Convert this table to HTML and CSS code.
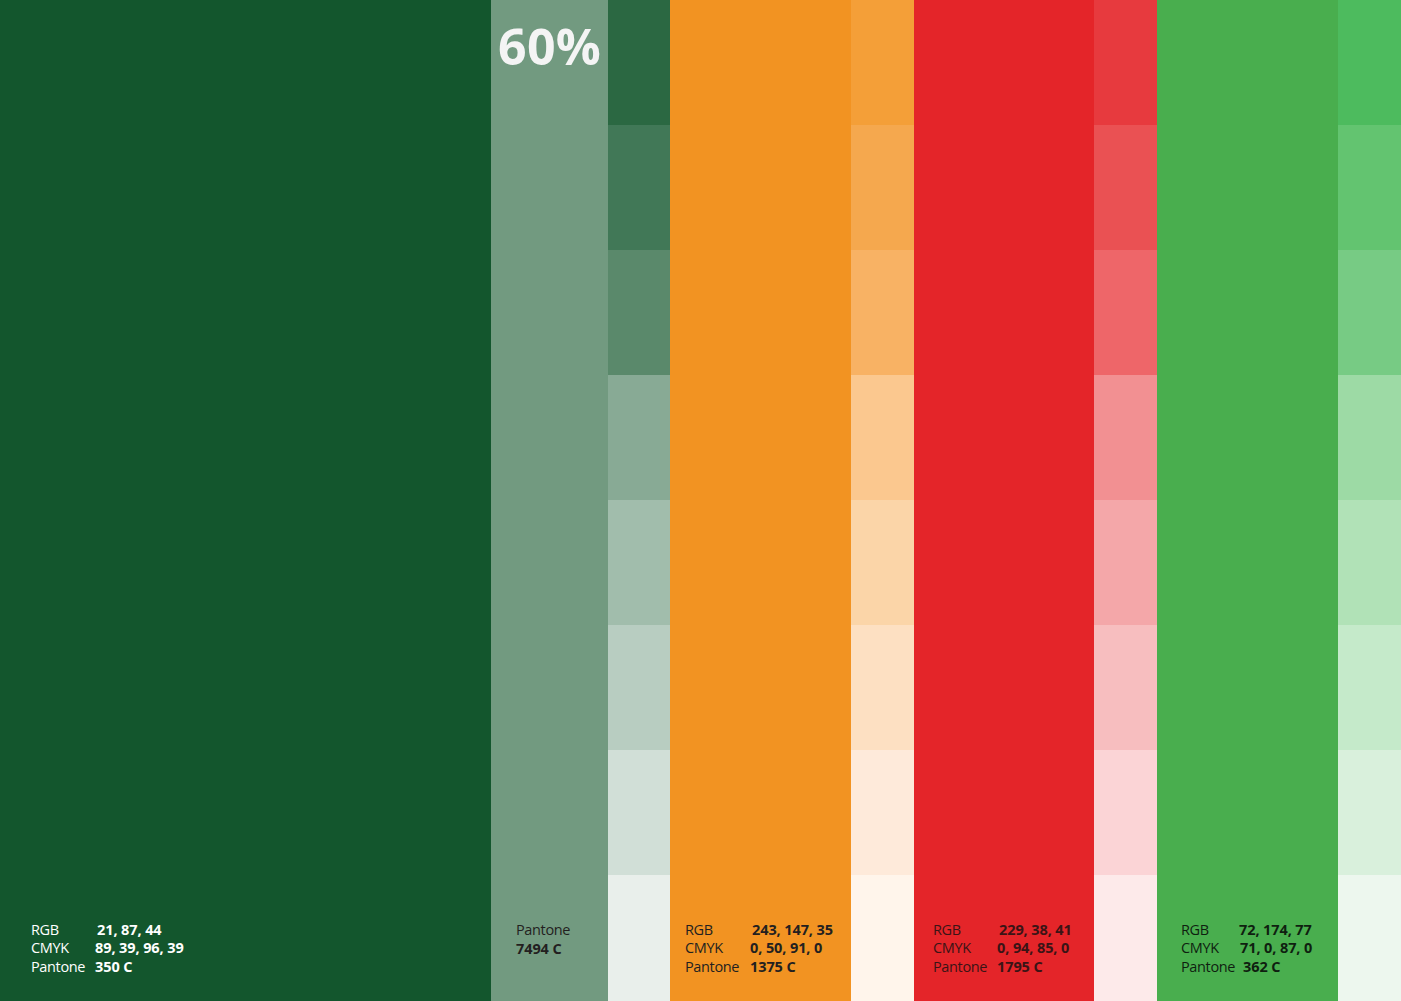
FILE: index.html
```html
<!DOCTYPE html>
<html>
<head>
<meta charset="utf-8">
<link rel="stylesheet" href="styles.css">
</head>
<body>
<div class="palette">
  <div class="col main dark">
    <div class="spec light-text">
      <span class="lbl">RGB</span><span class="val v-rgb">21, 87, 44</span>
      <span class="lbl">CMYK</span><span class="val">89, 39, 96, 39</span>
      <span class="lbl">Pantone</span><span class="val">350 C</span>
    </div>
  </div>
  <div class="col pale">
    <div class="pct">60%</div>
    <div class="spec-simple">
      <span class="lbl">Pantone</span>
      <span class="val">7494 C</span>
    </div>
  </div>
  <div class="col tints">
    <div style="background:#2b6842"></div>
    <div style="background:#417857"></div>
    <div style="background:#5a896b"></div>
    <div style="background:#88aa95"></div>
    <div style="background:#a1bdac"></div>
    <div style="background:#b8cdc1"></div>
    <div style="background:#d1dfd7"></div>
    <div style="background:#e9efeb"></div>
  </div>
  <div class="col main orange">
    <div class="spec o">
      <span class="lbl">RGB</span><span class="val v-rgb">243, 147, 35</span>
      <span class="lbl">CMYK</span><span class="val">0, 50, 91, 0</span>
      <span class="lbl">Pantone</span><span class="val">1375 C</span>
    </div>
  </div>
  <div class="col tints">
    <div style="background:#f49f38"></div>
    <div style="background:#f5a84e"></div>
    <div style="background:#f8b264"></div>
    <div style="background:#fbc88f"></div>
    <div style="background:#fbd5a8"></div>
    <div style="background:#fde0c2"></div>
    <div style="background:#feeada"></div>
    <div style="background:#fff5eb"></div>
  </div>
  <div class="col main red">
    <div class="spec r">
      <span class="lbl">RGB</span><span class="val v-rgb">229, 38, 41</span>
      <span class="lbl">CMYK</span><span class="val">0, 94, 85, 0</span>
      <span class="lbl">Pantone</span><span class="val">1795 C</span>
    </div>
  </div>
  <div class="col tints">
    <div style="background:#e73a3e"></div>
    <div style="background:#ea5153"></div>
    <div style="background:#ee6669"></div>
    <div style="background:#f29092"></div>
    <div style="background:#f4a7a9"></div>
    <div style="background:#f7bebf"></div>
    <div style="background:#fbd4d6"></div>
    <div style="background:#fdeaea"></div>
  </div>
  <div class="col main green">
    <div class="spec g">
      <span class="lbl">RGB</span><span class="val v-rgb">72, 174, 77</span>
      <span class="lbl">CMYK</span><span class="val">71, 0, 87, 0</span>
      <span class="lbl">Pantone</span><span class="val v-pan">362 C</span>
    </div>
  </div>
  <div class="col tints">
    <div style="background:#4dbb5e"></div>
    <div style="background:#63c470"></div>
    <div style="background:#77cb84"></div>
    <div style="background:#9ddaa5"></div>
    <div style="background:#b1e2b7"></div>
    <div style="background:#c5eaca"></div>
    <div style="background:#d9f0dc"></div>
    <div style="background:#edf7ee"></div>
  </div>
</div>
</body>
</html>
```
FILE: styles.css
```css
html, body {
  margin: 0;
  padding: 0;
}
body {
  font-family: "Open Sans", "Liberation Sans", sans-serif;
  width: 1401px;
  height: 1001px;
  overflow: hidden;
}
.palette {
  display: flex;
  height: 1001px;
  width: 1401px;
}
.col {
  flex: none;
  height: 100%;
  box-sizing: border-box;
}
.main {
  display: flex;
  flex-direction: column;
  justify-content: flex-end;
  padding-bottom: 24px;
}
.dark { width: 491px; background: #13562d; padding-left: 31px; }
.pale {
  width: 117px;
  background: #729a80;
  display: flex;
  flex-direction: column;
  justify-content: space-between;
  padding: 21px 0 42px 25px;
}
.orange { width: 181px; background: #f29322; padding-left: 15px; }
.red { width: 180px; background: #e42529; padding-left: 19px; }
.green { width: 181px; background: #49ae4e; padding-left: 24px; }
.tints {
  width: 63px;
  display: grid;
  grid-template-rows: 125px 125px 125px 125px 125px 125px 125px 126px;
}
.palette > .tints:nth-child(3) { width: 62px; }

.pct {
  color: #f4f4f4;
  font-weight: 700;
  font-size: 50px;
  line-height: 1;
  letter-spacing: 0.3px;
  margin-left: -18px;
}
.spec {
  display: grid;
  grid-template-columns: 64px auto;
  row-gap: 0;
  font-size: 14.5px;
  line-height: 18.5px;
  letter-spacing: -0.35px;
  color: #231f20;
  margin-bottom: 1px;
}
.spec .val { font-weight: 700; letter-spacing: -0.1px; }
.spec .v-rgb { margin-left: 2px; }
.light-text { color: #ffffff; }
.o { color: #231f20; grid-template-columns: 65px auto; }
.r { color: #3a1416; grid-template-columns: 64px auto; }
.g { color: #0f1f10; grid-template-columns: 59px auto; }
.g .v-rgb { margin-left: -1px; }
.g .v-pan { margin-left: 3px; }
.spec-simple {
  display: flex;
  flex-direction: column;
  font-size: 14.5px;
  line-height: 18.5px;
  letter-spacing: -0.35px;
  color: #231f20;
  margin-bottom: 1px;
}
.spec-simple .val { font-weight: 700; letter-spacing: -0.1px; }
```
